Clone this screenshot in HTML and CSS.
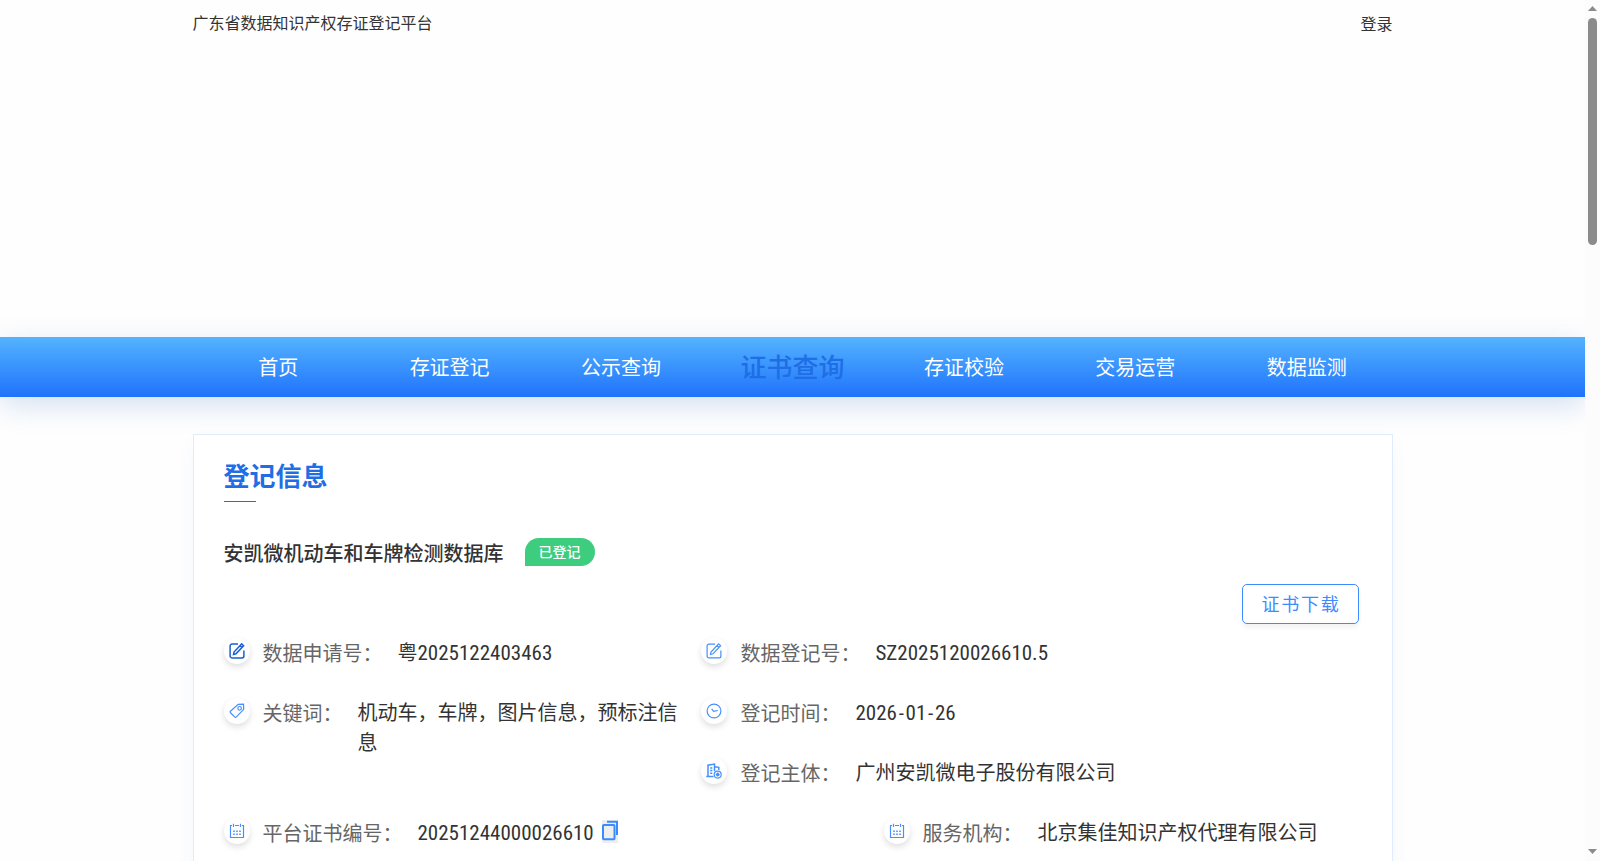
FILE: index.html
```html
<!DOCTYPE html>
<html lang="zh-CN">
<head>
<meta charset="utf-8">
<title>广东省数据知识产权存证登记平台</title>
<link rel="stylesheet" href="styles.css">
</head>
<body>
<svg class="defs" width="0" height="0" aria-hidden="true">
  <symbol id="edit" viewBox="0 0 16 16"><path d="M9 1.1H3A1.9 1.9 0 0 0 1.100 3V13A1.900 1.900 0 0 0 3 14.900H13A1.900 1.900 0 0 0 14.900 13V7.500M12.600.9l2 1.800-7.600 8.100-2.500.7.500-2.500zM10.900 2.700l2 1.800"/></symbol>
  <symbol id="tag" viewBox="0 0 16 16"><path d="M9.200 1.300 14.500 1.200 14.700 6.300 7.200 14.100Q6.500 14.700 5.800 14.100L1.300 9.500Q.8 8.800 1.400 8.200z"/><circle cx="10.600" cy="5.300" r="1.800"/></symbol>
  <symbol id="clock" viewBox="0 0 16 16"><circle cx="8" cy="8" r="6.900"/><path d="M5.600 5.800 7.600 8.300 11.800 7.500"/></symbol>
  <symbol id="building" viewBox="0 0 16 16"><path d="M.3 13.500H7.500M2 13.500V2.200L8.500 1.100V8M8.500 3.800 12.800 4.300V7M4.200 5H6.300M4.200 7.600H6.300M4.200 10.200H6.300" stroke-width="1.500"/><circle cx="11.700" cy="11.600" r="3.500"/><path d="M9.700 11.600h4M11.700 9.600v4M10.500 10.400l2.400 2.400M12.900 10.400l-2.400 2.400"/></symbol>
  <symbol id="calendar" viewBox="0 0 16 16"><path d="M3 2.500H1.500V14.500H14.500V2.500H13M6 2.500h4M4.500.8V4M11.500.8V4"/><path d="M4.200 8.200h1.600M7.200 8.200h1.600M10.200 8.200h1.600M4.200 11.200h1.600M7.200 11.200h1.600M10.200 11.200h1.600" stroke-width="1.400"/></symbol>
</svg>
<div class="page">
  <header class="top container"><span>广东省数据知识产权存证登记平台</span><a class="login">登录</a></header>
  <div class="banner"></div>
  <nav class="nav">
    <div class="container nav-list">
      <a>首页</a><a>存证登记</a><a>公示查询</a><a class="active">证书查询</a><a>存证校验</a><a>交易运营</a><a>数据监测</a>
    </div>
  </nav>
  <main class="card container">
    <h2 class="heading">登记信息</h2>
    <div class="title-row"><h3 class="title">安凯微机动车和车牌检测数据库</h3><span class="badge">已登记</span></div>
    <div class="actions"><button class="download">证书下载</button></div>
    <div class="info">
      <div class="col left">
        <div class="item"><i class="dot dark"><svg><use href="#edit"/></svg></i><span class="label">数据申请号：</span><span class="value">粤<span class="num">2025122403463</span></span></div>
        <div class="item"><i class="dot"><svg><use href="#tag"/></svg></i><span class="label">关键词：</span><span class="value">机动车，车牌，图片信息，预标注信息</span></div>
      </div>
      <div class="col right">
        <div class="item"><i class="dot"><svg><use href="#edit"/></svg></i><span class="label">数据登记号：</span><span class="value num">SZ2025120026610.5</span></div>
        <div class="item"><i class="dot"><svg><use href="#clock"/></svg></i><span class="label">登记时间：</span><span class="value num">2026<span class="dash">-</span>01<span class="dash">-</span>26</span></div>
        <div class="item"><i class="dot"><svg><use href="#building"/></svg></i><span class="label">登记主体：</span><span class="value">广州安凯微电子股份有限公司</span></div>
      </div>
    </div>
    <div class="info">
      <div class="col wide"><div class="item"><i class="dot"><svg><use href="#calendar"/></svg></i><span class="label">平台证书编号：</span><span class="value num">20251244000026610</span><svg class="copy" viewBox="0 0 16 23"><path d="M5 1.700H15V15"/><rect x="1" y="5" width="11.500" height="14.200" rx=".8"/></svg></div></div>
      <div class="col"><div class="item"><i class="dot"><svg><use href="#calendar"/></svg></i><span class="label">服务机构：</span><span class="value">北京集佳知识产权代理有限公司</span></div></div>
    </div>
  </main>
</div>
<div class="scrollbar"><i class="arrow up"></i><i class="thumb"></i><i class="arrow down"></i></div>
</body>
</html>
```
FILE: styles.css
```css
* { box-sizing: border-box; }
body {
  margin: 0;
  height: 861px;
  overflow: hidden;
  display: flex;
  background: #fff;
  color: #333;
  font-family: "Noto Sans CJK SC", sans-serif;
}
h2, h3 { margin: 0; }
.defs { position: absolute; }
.page { width: 1585px; height: 861px; overflow: hidden; background: #fefefe; }
.container { width: 1200px; margin: 0 auto; }
.top {
  height: 48px;
  display: flex;
  justify-content: space-between;
  font-size: 16px;
  line-height: 44px;
}
.login { line-height: 46px; }
.banner { height: 289px; }
.nav {
  height: 60px;
  background: linear-gradient(#54b3ff, #1f73fb);
  box-shadow: 0 8px 30px rgba(40, 100, 190, .2);
}
.nav-list { display: flex; }
.nav-list a {
  flex: 1;
  text-align: center;
  color: #fff;
  font-size: 20px;
  line-height: 60px;
}
.nav-list .active { color: #1f6ee6; font-size: 26px; font-weight: 500; line-height: 58px; }
.card {
  margin-top: 37px;
  height: 500px;
  padding: 0 30px;
  border: 1px solid #dfecfe;
  background: #fff;
  box-shadow: 0 10px 20px rgba(32, 96, 220, .04);
}
.heading {
  height: 67px;
  padding-top: 21px;
  font-size: 26px;
  line-height: 38px;
  font-weight: 700;
  color: #1f6ee6;
}
.heading::after { content: ""; display: block; width: 32px; height: 1px; margin-top: 7px; background: #1f6ee6; }
.title-row { display: flex; align-items: center; gap: 21px; height: 30px; margin-top: 35px; }
.title { font-size: 20px; font-weight: 500; line-height: 30px; margin-top: 1px; }
.badge {
  width: 70px;
  height: 28px;
  border-radius: 14px 14px 14px 0;
  background: #3ecd7f;
  color: #fff;
  font-size: 14px;
  font-weight: 500;
  line-height: 26px;
  text-align: center;
}
.actions { display: flex; justify-content: flex-end; padding: 17px 3px 0 0; height: 70px; }
.download {
  width: 117px;
  height: 40px;
  padding: 0 0 2px 2px;
  border: 1px solid #3d8bff;
  border-radius: 5px;
  background: #fff;
  box-shadow: 0 4px 4px rgba(0, 0, 0, .05);
  color: #3d8bff;
  font: 18px/36px "Noto Sans CJK SC", sans-serif;
  letter-spacing: 1.800px;
}
.info { display: flex; }
.left { width: 477.400px; }
.wide { width: 660px; }
.item { display: flex; min-height: 60px; line-height: 30px; font-size: 20px; }
.dot {
  flex: none;
  display: flex;
  align-items: center;
  justify-content: center;
  width: 26px;
  height: 26px;
  margin: 1px 13px 0 0;
  border-radius: 50%;
  background: #fff;
  box-shadow: 0 3px 6px rgba(0, 0, 0, .13);
}
.right .dot { margin-right: 13.600px; }
.dot svg { width: 16px; height: 16px; fill: none; stroke: #468fff; stroke-width: 1.200; }
.dark svg { stroke: #1a5fd0; stroke-width: 1.500; }
.label { flex: none; margin-right: 15px; color: #666; line-height: 32px; }
.left .value { width: 324px; }
.num {
  font-family: Roboto, "Noto Sans CJK SC", sans-serif;
  font-size: 21px;
  font-weight: 400;
  font-stretch: 85%;
}
.value.num { line-height: 32px; }
.dash { margin: 0 1.700px; }
.copy { width: 16px; height: 23px; margin: 3px 0 0 8px; background: #eee; fill: none; stroke: #3a8bff; stroke-width: 2; }
.scrollbar {
  width: 15px;
  height: 861px;
  background: #fcfcfc;
  display: flex;
  flex-direction: column;
  align-items: center;
  padding: 6px 0 7px;
}
.thumb { width: 9px; height: 227px; margin-top: 7px; border-radius: 5px; background: #8b8b8b; }
.arrow { width: 9px; height: 5px; background: #8b8b8b; clip-path: polygon(50% 0, 100% 100%, 0 100%); }
.down { margin-top: auto; clip-path: polygon(0 0, 100% 0, 50% 100%); }
```
